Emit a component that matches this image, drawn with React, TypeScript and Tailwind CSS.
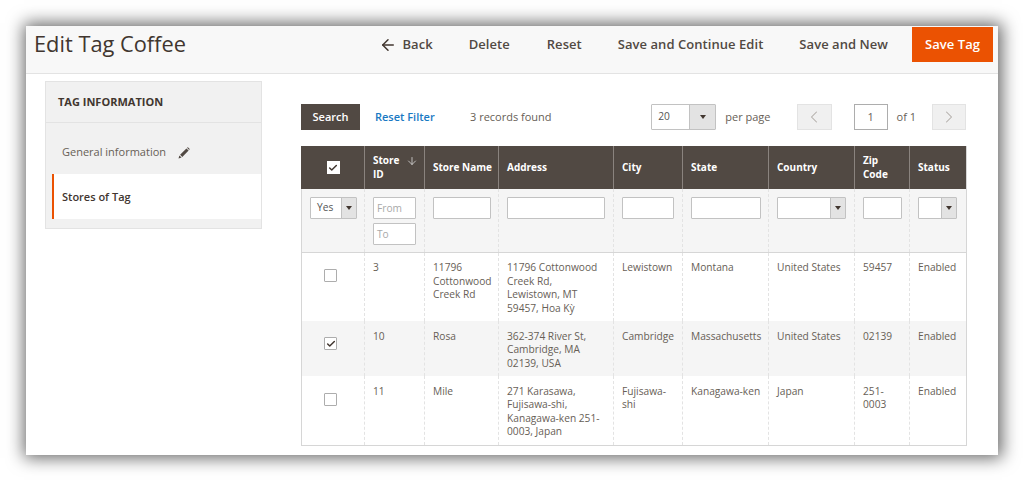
import { ArrowLeft, ArrowDown, Check, ChevronLeft, ChevronRight } from 'lucide-react';

function SelectBox({ value, className, arrow = 'w-[15px]' }: { value?: string; className: string; arrow?: string }) {
  return (
    <div className={`flex h-[22px] bg-white border border-[#c2c2c2] rounded-[1px] ${className}`}>
      <span className="flex-1 flex items-center pl-[6px] text-[10.2px] text-[#555]">{value}</span>
      <span className={`flex items-center justify-center bg-[#e3e3e3] border-l border-[#c2c2c2] ${arrow}`}>
        <span className="w-0 h-0 border-x-[3px] border-x-transparent border-t-[4px] border-t-[#41362f]" />
      </span>
    </div>
  );
}

function TextBox({ placeholder, className }: { placeholder?: string; className: string }) {
  return (
    <div className={`h-[22px] bg-white border border-[#c2c2c2] rounded-[1px] pl-[3px] leading-[20px] text-[10.2px] text-[#a9a9a9] ${className}`}>
      {placeholder}
    </div>
  );
}

function Checkbox({ checked }: { checked?: boolean }) {
  return (
    <div className="ml-[22px] w-[13px] h-[13px] bg-white border border-[#adadad] rounded-[1px] flex items-center justify-center">
      {checked && <Check className="w-[10px] h-[10px] text-[#41362f]" strokeWidth={3.5} />}
    </div>
  );
}

const headCell = 'border-l border-[#8a837e] pl-[8px] align-middle text-left text-[10px] leading-[13.5px] font-bold text-white';
const filterCell = 'border-l border-dashed border-[#e3e3e3] px-[8px] pt-[8px] align-top';
const bodyCell = 'border-l border-dashed border-[#e3e3e3] pl-[8px] pt-[8.5px] align-top text-[10.2px] leading-[13.6px] text-[#676056]';

const rows = [
  { checked: false, id: '3', name: '11796 Cottonwood Creek Rd', address: '11796 Cottonwood Creek Rd, Lewistown, MT 59457, Hoa Kỳ', city: 'Lewistown', state: 'Montana', country: 'United States', zip: '59457', height: 'h-[69px]', bg: 'bg-white', boxPad: 'pt-[16px]' },
  { checked: true, id: '10', name: 'Rosa', address: '362-374 River St, Cambridge, MA 02139, USA', city: 'Cambridge', state: 'Massachusetts', country: 'United States', zip: '02139', height: 'h-[55px]', bg: 'bg-[#f5f5f5]', boxPad: 'pt-[16px]' },
  { checked: false, id: '11', name: 'Mile', address: '271 Karasawa, Fujisawa-shi, Kanagawa-ken 251-0003, Japan', city: 'Fujisawa-shi', state: 'Kanagawa-ken', country: 'Japan', zip: '251-0003', height: 'h-[69px]', bg: 'bg-white', boxPad: 'pt-[17px]' },
];

export default function App() {
  return (
    <div className="w-[1023px] h-[480px] overflow-hidden bg-white pl-[26px] pt-[26px] font-['Open_Sans',sans-serif]">
      <div className="w-[972px] h-[429px] bg-white shadow-[1px_0_16px_3px_rgba(0,0,0,0.6)]">
        {/* Page header */}
        <div className="h-[48px] flex items-start bg-[#f8f8f8] border-b border-[#e3e3e3]">
          <h1 className="ml-[8px] mt-[2px] text-[21.8px] leading-[32px] text-[#41362f]">Edit Tag Coffee</h1>
          <div className="ml-auto mr-[5px] mt-px flex items-center text-[13px] font-semibold tracking-[0.05px] text-[#514943]">
            <ArrowLeft className="w-[18px] h-[18px] mr-[5px] text-[#41362f]" strokeWidth={2} />
            <span>Back</span>
            <span className="ml-[36px]">Delete</span>
            <span className="ml-[37px]">Reset</span>
            <span className="ml-[36px]">Save and Continue Edit</span>
            <span className="ml-[36px]">Save and New</span>
            <span className="ml-[24px] w-[81px] h-[35px] flex items-center justify-center bg-[#eb5202] text-white">Save Tag</span>
          </div>
        </div>

        <div className="flex">
          {/* Sidebar */}
          <aside className="ml-[19px] mt-[7px] w-[217px] h-[148px] bg-[#f1f1f1] border border-[#e3e3e3] flex flex-col">
            <div className="h-[41px] flex items-center pl-[12px] text-[11px] font-bold text-[#41362f] border-b border-[#e3e3e3]">TAG INFORMATION</div>
            <div className="h-[51px] flex items-center pl-[16px] pt-[8px] text-[11px] text-[#676056]">
              General information
              <svg className="ml-[12px] w-[12px] h-[12px]" viewBox="0 0 12 12" fill="#514943">
                <path d="M0.5 11.5 1.4 8.4 3.6 10.6ZM2.1 7.7 8.4 1.4 10.6 3.6 4.3 9.9ZM9 0.8 9.9 0.3 11.7 2.1 11.2 3Z" />
              </svg>
            </div>
            <div className="ml-[6px] h-[45px] flex items-center pl-[8px] pt-px bg-white border-l-2 border-[#eb5202] text-[11px] font-semibold text-[#41362f]">Stores of Tag</div>
          </aside>

          {/* Grid */}
          <main className="ml-[39px] w-[665px] pt-[30px]">
            <div className="h-[26px] flex items-center text-[11px] text-[#676056]">
              <span className="w-[59px] h-[26px] flex items-center justify-center bg-[#514943] text-white font-semibold">Search</span>
              <span className="ml-[15px] w-[95px] font-semibold text-[#1979c3]">Reset Filter</span>
              <span>3 records found</span>
              <SelectBox value="20" className="ml-auto w-[65px] !h-[26px]" arrow="w-[26px]" />
              <span className="ml-[9px]">per page</span>
              <span className="ml-[26px] w-[35px] h-[26px] flex items-center justify-center bg-[#f0f0f0] border border-[#e3e3e3]">
                <ChevronLeft className="w-[20px] h-[20px] text-[#b0aba7]" strokeWidth={1.25} />
              </span>
              <span className="ml-[22px] w-[34px] h-[26px] flex items-center justify-center bg-white border border-[#adadad]">1</span>
              <span className="ml-[9px]">of 1</span>
              <span className="ml-[16px] w-[34px] h-[26px] flex items-center justify-center bg-[#f0f0f0] border border-[#e3e3e3]">
                <ChevronRight className="w-[20px] h-[20px] text-[#b0aba7]" strokeWidth={1.25} />
              </span>
            </div>

            <table className="mt-[16px] w-[665px] table-fixed border-collapse border-x border-b border-[#d6d6d6]">
              <colgroup>
                <col className="w-[63px]" />
                <col className="w-[60px]" />
                <col className="w-[74px]" />
                <col className="w-[115px]" />
                <col className="w-[69px]" />
                <col className="w-[86px]" />
                <col className="w-[86px]" />
                <col className="w-[55px]" />
                <col className="w-[57px]" />
              </colgroup>
              <thead>
                <tr className="h-[43px] bg-[#514943]">
                  <th className="border-l border-[#514943] align-middle"><div className="mx-auto w-[13px] h-[13px] bg-white flex items-center justify-center"><Check className="w-[10px] h-[10px] text-[#41362f]" strokeWidth={3.5} /></div></th>
                  <th className={headCell}>
                    <div className="flex items-start justify-between pr-[6px]">
                      <span className="w-[30px]">Store ID</span>
                      <ArrowDown className="w-[12px] h-[12px] mt-[1px] text-[#e3e3e3]" strokeWidth={1.5} />
                    </div>
                  </th>
                  <th className={headCell}>Store Name</th>
                  <th className={headCell}>Address</th>
                  <th className={headCell}>City</th>
                  <th className={headCell}>State</th>
                  <th className={headCell}>Country</th>
                  <th className={headCell}>Zip<br />Code</th>
                  <th className={headCell}>Status</th>
                </tr>
              </thead>
              <tbody>
                <tr className="h-[63px] bg-[#f5f5f5] border-b border-[#d6d6d6]">
                  <td className="pl-[8px] pt-[8px] align-top"><SelectBox value="Yes" className="w-[47px]" /></td>
                  <td className={filterCell}>
                    <div className="flex flex-col gap-[4px]">
                      <TextBox placeholder="From" className="w-[43px]" />
                      <TextBox placeholder="To" className="w-[43px]" />
                    </div>
                  </td>
                  <td className={filterCell}><TextBox className="w-[58px]" /></td>
                  <td className={filterCell}><TextBox className="w-[98px]" /></td>
                  <td className={filterCell}><TextBox className="w-[52px]" /></td>
                  <td className={filterCell}><TextBox className="w-[70px]" /></td>
                  <td className={filterCell}><SelectBox className="w-[69px]" /></td>
                  <td className={filterCell}><TextBox className="w-[39px]" /></td>
                  <td className={filterCell}><SelectBox className="w-[39px]" /></td>
                </tr>
                {rows.map((row) => (
                  <tr key={row.id} className={`${row.height} ${row.bg}`}>
                    <td className={`align-top ${row.boxPad}`}><Checkbox checked={row.checked} /></td>
                    <td className={bodyCell}>{row.id}</td>
                    <td className={`${bodyCell} pr-[6px]`}>{row.name}</td>
                    <td className={`${bodyCell} pr-[8px]`}>{row.address}</td>
                    <td className={`${bodyCell} pr-[8px]`}>{row.city}</td>
                    <td className={bodyCell}>{row.state}</td>
                    <td className={bodyCell}>{row.country}</td>
                    <td className={`${bodyCell} pr-[8px]`}>{row.zip}</td>
                    <td className={bodyCell}>Enabled</td>
                  </tr>
                ))}
              </tbody>
            </table>
          </main>
        </div>
      </div>
    </div>
  );
}
